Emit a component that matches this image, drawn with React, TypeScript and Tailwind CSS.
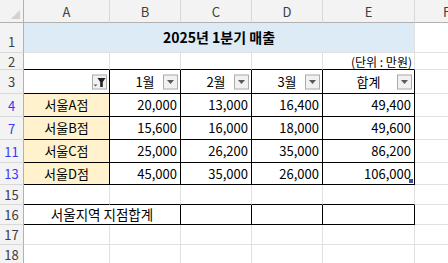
import type { ReactNode } from "react";
import clsx from "clsx";

type CellProps = {
	r?: boolean;
	b?: boolean;
	className?: string;
	children?: ReactNode;
};

// one sheet cell: owns only its right and bottom edge
const Cell = ({ r, b, className, children }: CellProps) => (
	<div
		className={clsx(
			"relative flex items-center overflow-visible whitespace-nowrap border-r border-b",
			r ? "border-r-black" : "border-r-[#e1e1e1]",
			b ? "border-b-black" : "border-b-[#e1e1e1]",
			className
		)}
	>
		{children}
	</div>
);

const RowHead = ({ n, blue, end }: { n: string; blue?: boolean; end?: boolean }) => (
	<div
		className={clsx(
			"flex justify-center border-r border-b border-r-[#b1b1b1] border-b-[#d8d8d8] bg-[#f3f3f3] text-[13px] leading-none",
			end ? "items-end pb-[4px]" : "items-center",
			blue ? "text-[#3a3af2]" : "text-[#404040]"
		)}
	>
		{n}
	</div>
);

const ColHead = ({ l }: { l: string }) => (
	<div className="flex items-center justify-center border-r border-b border-r-[#d8d8d8] border-b-[#b1b1b1] bg-[#f3f3f3] text-[13px] leading-none text-[#404040]">
		{l}
	</div>
);

const DropButton = ({ filtered }: { filtered?: boolean }) => (
	<div className="absolute top-1/2 right-[2px] flex h-[15px] w-[15px] -translate-y-1/2 items-center justify-center border border-[#acacac] bg-[#f1f1f1]">
		{filtered ? (
			<svg width="13" height="13" viewBox="0 0 13 13">
				<polygon points="0.5,9 4.5,9 2.5,11" fill="#5a5a5a" />
				<polygon points="4.5,2.5 12.5,2.5 9.8,6.5 9.8,11.5 7.2,11.5 7.2,6.5" fill="#222" />
			</svg>
		) : (
			<svg width="9" height="5" viewBox="0 0 9 5">
				<polygon points="1,0.5 8,0.5 4.5,4.5" fill="#5a5a5a" />
			</svg>
		)}
	</div>
);

const rows = [
	{ n: "4", name: "서울A점", v: ["20,000", "13,000", "16,400", "49,400"] },
	{ n: "7", name: "서울B점", v: ["15,600", "16,000", "18,000", "49,600"] },
	{ n: "11", name: "서울C점", v: ["25,000", "26,200", "35,000", "86,200"] },
	{ n: "13", name: "서울D점", v: ["45,000", "35,000", "26,000", "106,000"] },
];

export default function App() {
	return (
		<div className="h-[263px] w-[448px] overflow-hidden bg-white font-['Noto_Sans_CJK_KR',sans-serif] text-[12px] text-black">
			<div className="grid w-[479px] grid-cols-[24px_86px_71px_71px_71px_92px_64px] grid-rows-[23px_30px_17px_24px_23px_23px_23px_22px_20px_20px_20px_20px]">
				{/* column headers */}
				<div className="relative border-r border-b border-r-[#b1b1b1] border-b-[#b1b1b1] bg-[#f3f3f3]">
					<svg className="absolute right-[3px] bottom-[3px]" width="9" height="9" viewBox="0 0 9 9">
						<polygon points="9,0 9,9 0,9" fill="#d2d2d2" />
					</svg>
				</div>
				{["A", "B", "C", "D", "E", "F"].map((l) => (
					<ColHead key={l} l={l} />
				))}

				{/* row 1: title */}
				<RowHead n="1" end />
				<div className="col-span-5 flex items-center justify-center border-r border-b border-r-[#e1e1e1] border-b-[#e1e1e1] bg-[#ddebf7] text-[14px] font-bold">
					2025년 1분기 매출
				</div>
				<Cell />

				{/* row 2: unit */}
				<RowHead n="2" />
				<Cell b />
				<Cell b />
				<Cell b />
				<Cell b />
				<Cell b className="items-end justify-end pr-[2px] text-[12px] leading-[15px]">
					(단위 : 만원)
				</Cell>
				<Cell />

				{/* row 3: headers */}
				<RowHead n="3" />
				<Cell r b>
					<DropButton filtered />
				</Cell>
				{["1월", "2월", "3월", "합계"].map((h) => (
					<Cell key={h} r b className="justify-center text-[13px]">
						{h}
						<DropButton />
					</Cell>
				))}
				<Cell />

				{rows.map((row, i) => (
					<div key={row.n} className="contents">
						<RowHead n={row.n} blue />
						<Cell r b className="justify-center bg-[#fff2cc] text-[13px]">
							{row.name}
						</Cell>
						{row.v.map((v, j) => (
							<Cell key={j} r b className="justify-end pr-[3px] text-[13px]">
								{v}
								{i === rows.length - 1 && j === 3 && (
									<div className="absolute right-[1px] bottom-[1px] h-[4px] w-[4px] bg-[#3b4ea6]" />
								)}
							</Cell>
						))}
						<Cell />
					</div>
				))}

				{/* row 15 */}
				<RowHead n="15" />
				<Cell b />
				<Cell b />
				<Cell b />
				<Cell b />
				<Cell b />
				<Cell />

				{/* row 16: total */}
				<RowHead n="16" />
				<div className="col-span-2 flex items-center justify-center border-r border-b border-r-black border-b-black text-[13.5px]">
					서울지역 지점합계
				</div>
				<Cell r b />
				<Cell r b />
				<Cell r b />
				<Cell />

				<RowHead n="17" />
				<Cell />
				<Cell />
				<Cell />
				<Cell />
				<Cell />
				<Cell />

				<RowHead n="18" />
				<Cell />
				<Cell />
				<Cell />
				<Cell />
				<Cell />
				<Cell />
			</div>
		</div>
	);
}
